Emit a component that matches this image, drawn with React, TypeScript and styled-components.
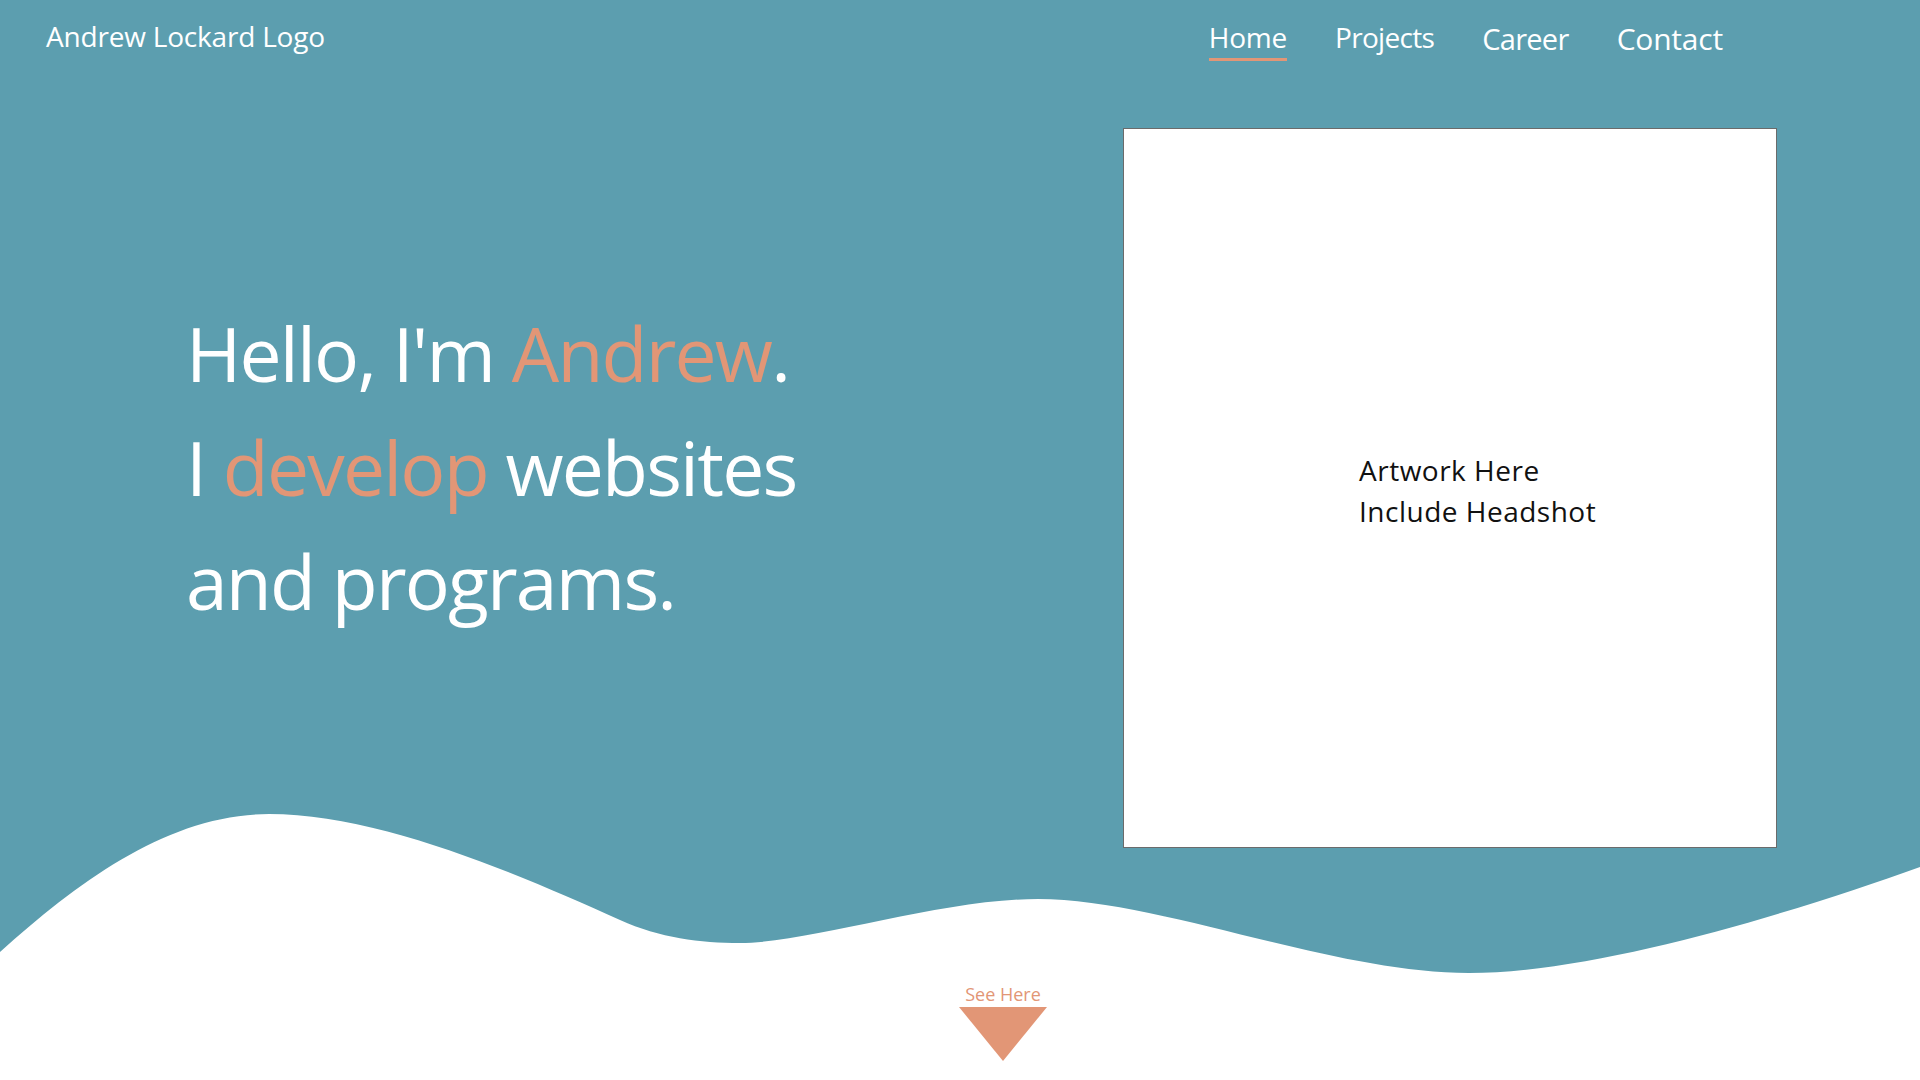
import React from "react";
import styled, { createGlobalStyle } from "styled-components";

const TEAL = "#5c9eaf";
const ORANGE = "#e29676";

const GlobalStyle = createGlobalStyle`
  html, body {
    margin: 0;
    padding: 0;
    background: #ffffff;
  }
  body {
    font-family: "Open Sans", "Noto Sans", sans-serif;
  }
  * { box-sizing: border-box; }
`;

const Page = styled.div`
  position: relative;
  width: 1920px;
  height: 1080px;
  overflow: hidden;
  background: #ffffff;
`;

const WaveBackdrop = styled.svg`
  position: absolute;
  top: 0;
  left: 0;
  width: 1920px;
  height: 1080px;
  z-index: 0;
`;

const Content = styled.div`
  position: relative;
  z-index: 1;
  display: flex;
  flex-direction: column;
`;

const Header = styled.header`
  height: 74px;
  display: flex;
  align-items: center;
  justify-content: space-between;
  padding: 0 197px 0 46px;
`;

const Logo = styled.div`
  color: #ffffff;
  font-size: 28px;
  letter-spacing: -0.2px;
  margin-top: -2px;
`;

const Nav = styled.nav`
  display: flex;
  align-items: center;
  gap: 48px;
`;

const NavLink = styled.a<{ $active?: boolean; $size?: number; $tight?: boolean }>`
  color: #ffffff;
  text-decoration: none;
  font-size: ${(p) => p.$size ?? 28}px;
  letter-spacing: ${(p) => (p.$tight ? -0.7 : -0.2)}px;
  padding-bottom: 2px;
  border-bottom: 3px solid ${(p) => (p.$active ? ORANGE : "transparent")};
  margin-top: ${(p) => (p.$size && p.$size > 28 ? 8 : 4)}px;
`;

const Hero = styled.section`
  display: flex;
  justify-content: space-between;
  align-items: flex-start;
  padding: 0 143px 0 186px;
  height: 774px;
`;

const Headline = styled.h1`
  margin: 222px 0 0 0;
  font-weight: 400;
  font-size: 75px;
  line-height: 114px;
  color: #ffffff;
  letter-spacing: -1.8px;
`;

const Accent = styled.span`
  color: ${ORANGE};
`;

const ArtBox = styled.div`
  margin-top: 54px;
  width: 654px;
  height: 720px;
  background: #ffffff;
  border: 1px solid #6b6b6b;
  display: flex;
  align-items: center;
  padding: 6px 0 0 235px;
`;

const ArtText = styled.p`
  margin: 0;
  font-size: 28px;
  line-height: 41px;
  color: #111111;
  letter-spacing: 0.5px;
`;

const Footer = styled.section`
  display: flex;
  flex-direction: column;
  align-items: center;
  padding: 134px 0 0 86px;
`;

const SeeHere = styled.span`
  color: ${ORANGE};
  font-size: 18px;
  line-height: 25px;
`;

const Arrow = styled.div`
  width: 0;
  height: 0;
  border-left: 44px solid transparent;
  border-right: 44px solid transparent;
  border-top: 54px solid ${ORANGE};
`;

export default function App() {
  return (
    <>
      <GlobalStyle />
      <Page>
        <WaveBackdrop viewBox="0 0 1920 1080" aria-hidden>
          <path
            fill={TEAL}
            d="M0,0 L1920,0 L1920,867
               C1800,910 1600,973 1469,973
               C1330,973 1160,899 1038,899
               C940,899 810,943 740,943
               C700,943 660,938 620,920
               C520,875 380,814 269,814
               C170,814 80,880 0,952 Z"
          />
        </WaveBackdrop>
        <Content>
          <Header>
            <Logo>Andrew Lockard Logo</Logo>
            <Nav>
              <NavLink $active>Home</NavLink>
              <NavLink $tight>Projects</NavLink>
              <NavLink $size={29} $tight>Career</NavLink>
              <NavLink $size={30}>Contact</NavLink>
            </Nav>
          </Header>
          <Hero>
            <Headline>
              Hello, I'm <Accent>Andrew</Accent>.
              <br />I <Accent>develop</Accent> websites
              <br />
              and programs.
            </Headline>
            <ArtBox>
              <ArtText>
                Artwork Here
                <br />
                Include Headshot
              </ArtText>
            </ArtBox>
          </Hero>
          <Footer>
            <SeeHere>See Here</SeeHere>
            <Arrow />
          </Footer>
        </Content>
      </Page>
    </>
  );
}
